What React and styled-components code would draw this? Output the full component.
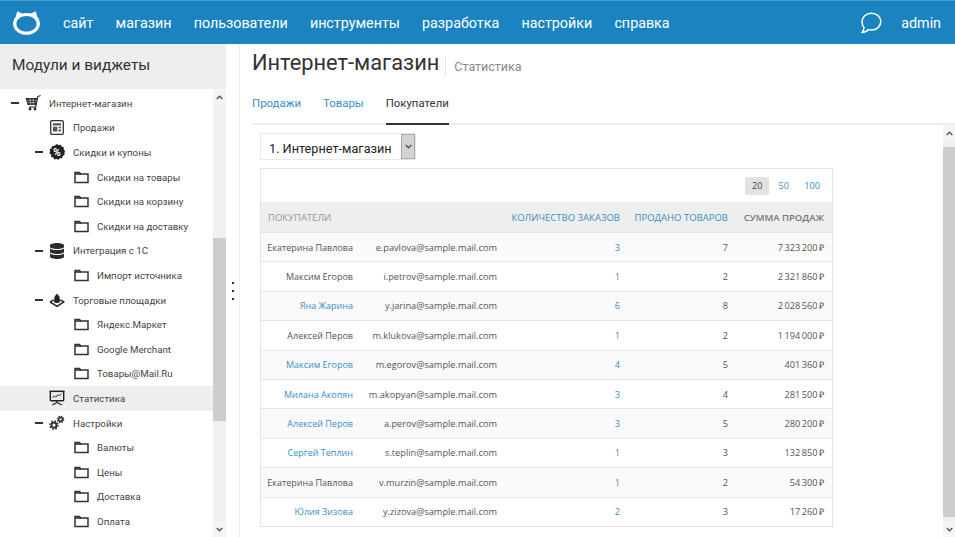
import React from 'react'
import styled, { createGlobalStyle } from 'styled-components'
import { FaDatabase } from 'react-icons/fa'

const navItems = ['сайт', 'магазин', 'пользователи', 'инструменты', 'разработка', 'настройки', 'справка']

const tree = [
    { level: 0, icon: 'cart', label: 'Интернет-магазин', open: true },
    { level: 1, icon: 'report', label: 'Продажи' },
    { level: 1, icon: 'percent', label: 'Скидки и купоны', open: true },
    { level: 2, icon: 'folder', label: 'Скидки на товары' },
    { level: 2, icon: 'folder', label: 'Скидки на корзину' },
    { level: 2, icon: 'folder', label: 'Скидки на доставку' },
    { level: 1, icon: 'db', label: 'Интеграция с 1С', open: true },
    { level: 2, icon: 'folder', label: 'Импорт источника' },
    { level: 1, icon: 'market', label: 'Торговые площадки', open: true },
    { level: 2, icon: 'folder', label: 'Яндекс.Маркет' },
    { level: 2, icon: 'folder', label: 'Google Merchant' },
    { level: 2, icon: 'folder', label: 'Товары@Mail.Ru' },
    { level: 1, icon: 'stats', label: 'Статистика', active: true },
    { level: 1, icon: 'gears', label: 'Настройки', open: true },
    { level: 2, icon: 'folder', label: 'Валюты' },
    { level: 2, icon: 'folder', label: 'Цены' },
    { level: 2, icon: 'folder', label: 'Доставка' },
    { level: 2, icon: 'folder', label: 'Оплата' },
]

const buyers = [
    { name: 'Екатерина Павлова', email: 'e.pavlova@sample.mail.com', orders: 3, sold: 7, sum: '7\u2009323\u2009200\u2009₽' },
    { name: 'Максим Егоров', email: 'i.petrov@sample.mail.com', orders: 1, sold: 2, sum: '2\u2009321\u2009860\u2009₽' },
    { name: 'Яна Жарина', link: true, email: 'y.jarina@sample.mail.com', orders: 6, sold: 8, sum: '2\u2009028\u2009560\u2009₽' },
    { name: 'Алексей Перов', email: 'm.klukova@sample.mail.com', orders: 1, sold: 2, sum: '1\u2009194\u2009000\u2009₽' },
    { name: 'Максим Егоров', link: true, email: 'm.egorov@sample.mail.com', orders: 4, sold: 5, sum: '401\u2009360\u2009₽' },
    { name: 'Милана Акопян', link: true, email: 'm.akopyan@sample.mail.com', orders: 3, sold: 4, sum: '281\u2009500\u2009₽' },
    { name: 'Алексей Перов', link: true, email: 'a.perov@sample.mail.com', orders: 3, sold: 5, sum: '280\u2009200\u2009₽' },
    { name: 'Сергей Теплин', link: true, email: 's.teplin@sample.mail.com', orders: 1, sold: 3, sum: '132\u2009850\u2009₽' },
    { name: 'Екатерина Павлова', email: 'v.murzin@sample.mail.com', orders: 1, sold: 2, sum: '54\u2009300\u2009₽' },
    { name: 'Юлия Зизова', link: true, email: 'y.zizova@sample.mail.com', orders: 2, sold: 3, sum: '17\u2009260\u2009₽' },
]

const Logo = () => (
    <svg width="27" height="25" viewBox="0 0 27 25">
        <path
            fillRule="evenodd"
            fill="#fff"
            d="M4.6 1.2 L8.8 3.4 Q13.5 2.8 18.2 3.4 L22.4 1.2 Q23.8 3.4 23.8 6 Q27 9.2 27 13.2 C27 20 21 24.8 13.5 24.8 C6 24.8 0 20 0 13.2 Q0 9.2 3.2 6 Q3.2 3.4 4.6 1.2 Z M13.5 6 C8 6 3.4 9.2 3.4 13.8 C3.4 18.4 8 21.6 13.5 21.6 C19 21.6 23.6 18.4 23.6 13.8 C23.6 9.2 19 6 13.5 6 Z"
        />
    </svg>
)

const Bubble = () => (
    <svg width="22" height="22" viewBox="0 0 22 22">
        <path d="M11.5 1.2 C17 1.2 20.8 5 20.8 9.6 C20.8 14.4 16.6 18 11.5 18 C10.4 18 9.4 17.9 8.4 17.6 C6.8 19.4 4.6 20.6 1.8 20.6 C3.6 19 4 17.4 4 15.6 C2.6 14 2 12 2 9.8 C2 5 6 1.2 11.5 1.2 Z" fill="none" stroke="#fff" strokeWidth="1.5" strokeLinejoin="round" />
    </svg>
)

const Folder = () => (
    <svg width="15" height="13" viewBox="0 0 15 13">
        <path d="M1 11.5 V1.5 H5.5 L6.8 3 H14 V11.5 Z" fill="none" stroke="#333" strokeWidth="1.5" />
        <path d="M1 3 H7" stroke="#333" strokeWidth="1.6" />
    </svg>
)

const Cart = () => (
    <svg width="16" height="16" viewBox="0 0 16 16">
        <path d="M15.6 0.6 L12.8 1.6 L10.8 12 H4" fill="none" stroke="#222" strokeWidth="1.1" />
        <path d="M0.6 3 H12.4 L10.8 10 H2.6 Z" fill="#222" />
        <path d="M2 5.3 H12 M2.6 7.6 H11.4 M5 3 L5.6 10 M8.2 3 L8.2 10" stroke="#fff" strokeWidth="0.5" />
        <circle cx="5" cy="14" r="1.4" fill="#222" />
        <circle cx="10" cy="14" r="1.4" fill="#222" />
    </svg>
)

const Report = () => (
    <svg width="14" height="15" viewBox="0 0 14 15">
        <rect x="0.7" y="0.7" width="12.6" height="13.6" rx="1.2" fill="none" stroke="#333" strokeWidth="1.3" />
        <path d="M3 3.2 H11 V5.4 H3 Z M8.6 6.8 H11 V8.2 H8.6 Z M8.6 9.4 H11 V11.6 H8.6 Z M3 6.8 H7.4 V11.6 H3 Z" fill="#555" />
    </svg>
)

const Percent = () => (
    <svg width="16" height="16" viewBox="0 0 16 16">
        <path d="M8 0 L9.7 1.2 L11.7 0.8 L12.7 2.6 L14.7 3.2 L14.7 5.3 L16 7 L15.4 8.8 L15.6 10.8 L13.8 11.9 L13.2 13.9 L11 14.2 L9.4 15.8 L7.6 15 L5.5 15.4 L4.2 13.6 L2.2 12.9 L2.2 10.8 L0.4 9.2 L1 7.3 L0.7 5.3 L2.5 4.2 L3.1 2.1 L5.2 2 Z" fill="#222" />
        <text x="8" y="11.6" textAnchor="middle" fontSize="10.5" fontWeight="700" fontFamily="Roboto, sans-serif" fill="#fff">%</text>
    </svg>
)

const Market = () => (
    <svg width="18" height="15" viewBox="0 0 18 15">
        <path d="M1.2 9 L9 14 L16.8 9 L12.6 6.8" fill="none" stroke="#222" strokeWidth="1.7" strokeLinejoin="round" />
        <path d="M1.2 9 L5.4 6.8" fill="none" stroke="#222" strokeWidth="1.7" />
        <path d="M5.6 9.6 L6.2 3.4 Q6.6 1.8 7.8 1.6 V0.4 H10.2 V1.6 Q11.4 1.8 11.8 3.4 L12.4 9.6 Q9 11 5.6 9.6 Z" fill="#222" />
    </svg>
)

const Stats = () => (
    <svg width="17" height="16" viewBox="0 0 17 16">
        <path d="M0.4 1 H16.6" stroke="#222" strokeWidth="1.4" />
        <rect x="1.4" y="1" width="14.2" height="10" rx="0.8" fill="none" stroke="#222" strokeWidth="1.5" />
        <path d="M3.6 7.8 L5.6 5.6 L7.2 7.2 L9.6 4.4 L10.8 5.8 L13.2 3.6" fill="none" stroke="#222" strokeWidth="1" />
        <path d="M8.5 11 V13 M3.4 15.4 L8.5 12.8 L13.6 15.4" fill="none" stroke="#222" strokeWidth="1.4" />
    </svg>
)

const Gears = () => (
    <svg width="18" height="16" viewBox="0 0 18 16">
        <circle cx="5.6" cy="10.4" r="2.8" fill="none" stroke="#2a2a2a" strokeWidth="2" />
        <circle cx="5.6" cy="10.4" r="4.6" fill="none" stroke="#2a2a2a" strokeWidth="1.6" strokeDasharray="1.9 1.7" />
        <circle cx="13" cy="4" r="2.1" fill="none" stroke="#2a2a2a" strokeWidth="1.6" />
        <circle cx="13" cy="4" r="3.5" fill="none" stroke="#2a2a2a" strokeWidth="1.4" strokeDasharray="1.6 1.14" />
    </svg>
)

const icons = {
    cart: <Cart />,
    report: <Report />,
    percent: <Percent />,
    db: <FaDatabase size={16} color="#2a2a2a" />,
    market: <Market />,
    stats: <Stats />,
    gears: <Gears />,
    folder: <Folder />,
}

const Chevron = ({ up }) => (
    <svg width="7" height="5" viewBox="0 0 7 5">
        <path d={up ? 'M0.7 4 L3.5 1.2 L6.3 4' : 'M0.7 1 L3.5 3.8 L6.3 1'} fill="none" stroke="#555" strokeWidth="1.3" />
    </svg>
)

const Scrollbar = ({ width, top, height }) => (
    <Track $width={width}>
        <ScrollArrow><Chevron up /></ScrollArrow>
        <TrackBody>
            <Thumb $top={top} $height={height} />
        </TrackBody>
        <ScrollArrow><Chevron /></ScrollArrow>
    </Track>
)

const App = () => {
    return (
        <Page>
            <GlobalStyle />
            <Header>
                <LogoBox><Logo /></LogoBox>
                <Nav>
                    {navItems.map((item) => <NavLink key={item}>{item}</NavLink>)}
                </Nav>
                <HeaderRight>
                    <Bubble />
                    <UserName>admin</UserName>
                </HeaderRight>
            </Header>
            <Body>
                <Sidebar>
                    <SidebarTitle>Модули и виджеты</SidebarTitle>
                    <SidebarBody>
                        <TreeList>
                            {tree.map((row) => (
                                <TreeRow key={row.label} $level={row.level} $active={row.active}>
                                    <Toggle>{row.open && <Minus />}</Toggle>
                                    <TreeIcon>{icons[row.icon]}</TreeIcon>
                                    <TreeLabel>{row.label}</TreeLabel>
                                </TreeRow>
                            ))}
                        </TreeList>
                        <Scrollbar width={13} top={133} height={183} />
                    </SidebarBody>
                </Sidebar>
                <Splitter>
                    <Dot /><Dot /><Dot />
                </Splitter>
                <Main>
                    <TitleRow>
                        <Title>Интернет-магазин</Title>
                        <SubTitle>Статистика</SubTitle>
                    </TitleRow>
                    <Tabs>
                        <Tab>Продажи</Tab>
                        <Tab>Товары</Tab>
                        <Tab $active>Покупатели</Tab>
                    </Tabs>
                    <Content>
                        <ContentInner>
                            <SelectBox>
                                <SelectText>1. Интернет-магазин</SelectText>
                                <SelectButton><Chevron /></SelectButton>
                            </SelectBox>
                            <Table>
                                <Pager>
                                    <PageSize $active>20</PageSize>
                                    <PageSize>50</PageSize>
                                    <PageSize>100</PageSize>
                                </Pager>
                                <HeadRow>
                                    <HeadFirst>ПОКУПАТЕЛИ</HeadFirst>
                                    <HeadCell $link>КОЛИЧЕСТВО ЗАКАЗОВ</HeadCell>
                                    <HeadCell $link>ПРОДАНО ТОВАРОВ</HeadCell>
                                    <HeadCell>СУММА ПРОДАЖ</HeadCell>
                                </HeadRow>
                                {buyers.map((b) => (
                                    <Row key={b.email}>
                                        <Cell $link={b.link} $small>{b.name}</Cell>
                                        <Cell>{b.email}</Cell>
                                        <Cell $link>{b.orders}</Cell>
                                        <Cell>{b.sold}</Cell>
                                        <Cell>{b.sum}</Cell>
                                    </Row>
                                ))}
                            </Table>
                        </ContentInner>
                        <Scrollbar width={12} top={6} height={370} />
                    </Content>
                </Main>
            </Body>
        </Page>
    )
}

const Minus = styled.span`
    display: block;
    width: 8px;
    height: 2px;
    background: #333;
`

const GlobalStyle = createGlobalStyle`
    html, body {
        margin: 0;
        height: 100%;
        overflow: hidden;
        background: #fff;
    }
    * {
        box-sizing: border-box;
    }
`
const Page = styled.div`
    width: 955px;
    height: 537px;
    display: flex;
    flex-direction: column;
    overflow: hidden;
    font-family: Roboto, sans-serif;
    color: #333;
`
const Header = styled.div`
    flex: none;
    height: 44px;
    display: flex;
    align-items: center;
    background: #1a83c0;
    border-top: 1px solid #4a9ccb;
`
const LogoBox = styled.div`
    width: 63px;
    padding-left: 13px;
    display: flex;
    align-items: center;
`
const Nav = styled.div`
    display: flex;
    gap: 22.2px;
`
const NavLink = styled.a`
    font-size: 14.3px;
    color: #fff;
`
const HeaderRight = styled.div`
    margin-left: auto;
    padding-right: 14px;
    display: flex;
    align-items: center;
    gap: 19px;
`
const UserName = styled.span`
    font-size: 14.3px;
    color: #fff;
`
const Body = styled.div`
    flex: 1;
    min-height: 0;
    display: flex;
`
const Sidebar = styled.div`
    flex: none;
    width: 226px;
    display: flex;
    flex-direction: column;
`
const SidebarTitle = styled.div`
    flex: none;
    height: 45px;
    padding: 0 0 4px 12px;
    display: flex;
    align-items: center;
    background: #eee;
    font-size: 15.4px;
    color: #333;
`
const SidebarBody = styled.div`
    flex: 1;
    min-height: 0;
    display: flex;
`
const TreeList = styled.div`
    flex: 1;
    min-width: 0;
    padding-top: 2px;
    overflow: hidden;
`
const TreeRow = styled.div`
    height: 24.6px;
    display: flex;
    align-items: center;
    padding-left: ${(p) => 11 + p.$level * 24}px;
    background: ${(p) => (p.$active ? '#eee' : 'transparent')};
`
const Toggle = styled.span`
    flex: none;
    width: 14px;
    display: flex;
`
const TreeIcon = styled.span`
    flex: none;
    width: 16px;
    margin-right: 8px;
    display: flex;
    justify-content: center;
    align-items: center;
`
const TreeLabel = styled.span`
    font-size: 9.7px;
    color: #444;
    white-space: nowrap;
`
const Track = styled.div`
    flex: none;
    width: ${(p) => p.$width}px;
    display: flex;
    flex-direction: column;
    background: #f0f0f0;
`
const ScrollArrow = styled.div`
    flex: none;
    height: 16px;
    display: flex;
    align-items: center;
    justify-content: center;
    background: #f4f4f4;
`
const TrackBody = styled.div`
    flex: 1;
    min-height: 0;
    overflow: hidden;
`
const Thumb = styled.div`
    margin-top: ${(p) => p.$top}px;
    height: ${(p) => p.$height}px;
    background: #cdcdcd;
`
const Splitter = styled.div`
    flex: none;
    width: 14px;
    display: flex;
    flex-direction: column;
    align-items: center;
    justify-content: center;
    gap: 6px;
    border-right: 1px solid #eee;
`
const Dot = styled.span`
    width: 2px;
    height: 2px;
    background: #333;
`
const Main = styled.div`
    flex: 1;
    min-width: 0;
    display: flex;
    flex-direction: column;
`
const TitleRow = styled.div`
    flex: none;
    height: 38px;
    padding-left: 12px;
    display: flex;
    align-items: center;
`
const Title = styled.div`
    font-size: 21.8px;
    color: #333;
    line-height: 20px;
`
const SubTitle = styled.div`
    height: 20px;
    margin: 6px 0 0 6px;
    padding-left: 8px;
    display: flex;
    align-items: center;
    border-left: 1px solid #e4e4e4;
    font-size: 12.5px;
    color: #888;
`
const Tabs = styled.div`
    flex: none;
    height: 43px;
    margin-left: 12px;
    display: flex;
    gap: 22px;
    border-bottom: 2px solid #eee;
`
const Tab = styled.a`
    height: 43px;
    display: flex;
    align-items: center;
    font-size: 11.4px;
    color: ${(p) => (p.$active ? '#333' : '#3a8fc7')};
    border-bottom: 2px solid ${(p) => (p.$active ? '#333' : 'transparent')};
`
const Content = styled.div`
    flex: 1;
    min-height: 0;
    display: flex;
`
const ContentInner = styled.div`
    flex: 1;
    min-width: 0;
    padding: 8px 0 0 20px;
`
const SelectBox = styled.div`
    width: 156px;
    height: 27px;
    display: flex;
    border: 1px solid #e8e8e8;
    overflow: hidden;
`
const SelectText = styled.div`
    flex: 1;
    min-width: 0;
    padding: 7px 0 0 8px;
    font-size: 12.7px;
    color: #222;
    white-space: nowrap;
`
const SelectButton = styled.div`
    flex: none;
    width: 14px;
    display: flex;
    align-items: center;
    justify-content: center;
    background: #d4d4d4;
    border: 1px solid #aaa;
`
const Table = styled.div`
    width: 573px;
    margin-top: 8px;
    border: 1px solid #e4e4e4;
    font-family: "Open Sans", sans-serif;
    font-size: 9.5px;
`
const Pager = styled.div`
    height: 33px;
    padding-right: 6px;
    display: flex;
    align-items: center;
    justify-content: flex-end;
    gap: 2.5px;
`
const PageSize = styled.a`
    height: 18px;
    min-width: 24px;
    padding: 0 6px;
    display: flex;
    align-items: center;
    justify-content: center;
    border-radius: 2px;
    font-size: 9.2px;
    color: ${(p) => (p.$active ? '#444' : '#3a8fc7')};
    background: ${(p) => (p.$active ? '#e2e2e2' : 'transparent')};
`
const HeadRow = styled.div`
    height: 30px;
    display: grid;
    grid-template-columns: 1fr 120px 108px 96px;
    align-items: center;
    padding-right: 8px;
    background: #eee;
`
const HeadFirst = styled.div`
    padding-left: 7px;
    color: #999;
`
const HeadCell = styled.div`
    text-align: right;
    color: ${(p) => (p.$link ? '#3a8fc7' : '#777')};
    font-weight: ${(p) => (p.$link ? 400 : 600)};
`
const Row = styled.div`
    height: 29.4px;
    display: grid;
    grid-template-columns: 92px 144px 123px 108px 96px;
    align-items: center;
    padding-right: 7px;
    border-top: 1px solid #e4e4e4;
    &:nth-child(odd) {
        background: #fafafa;
    }
`
const Cell = styled.div`
    text-align: right;
    white-space: nowrap;
    font-size: ${(p) => (p.$small ? '9px' : '9.2px')};
    color: ${(p) => (p.$link ? '#3a8fc7' : '#555')};
`

export default App
